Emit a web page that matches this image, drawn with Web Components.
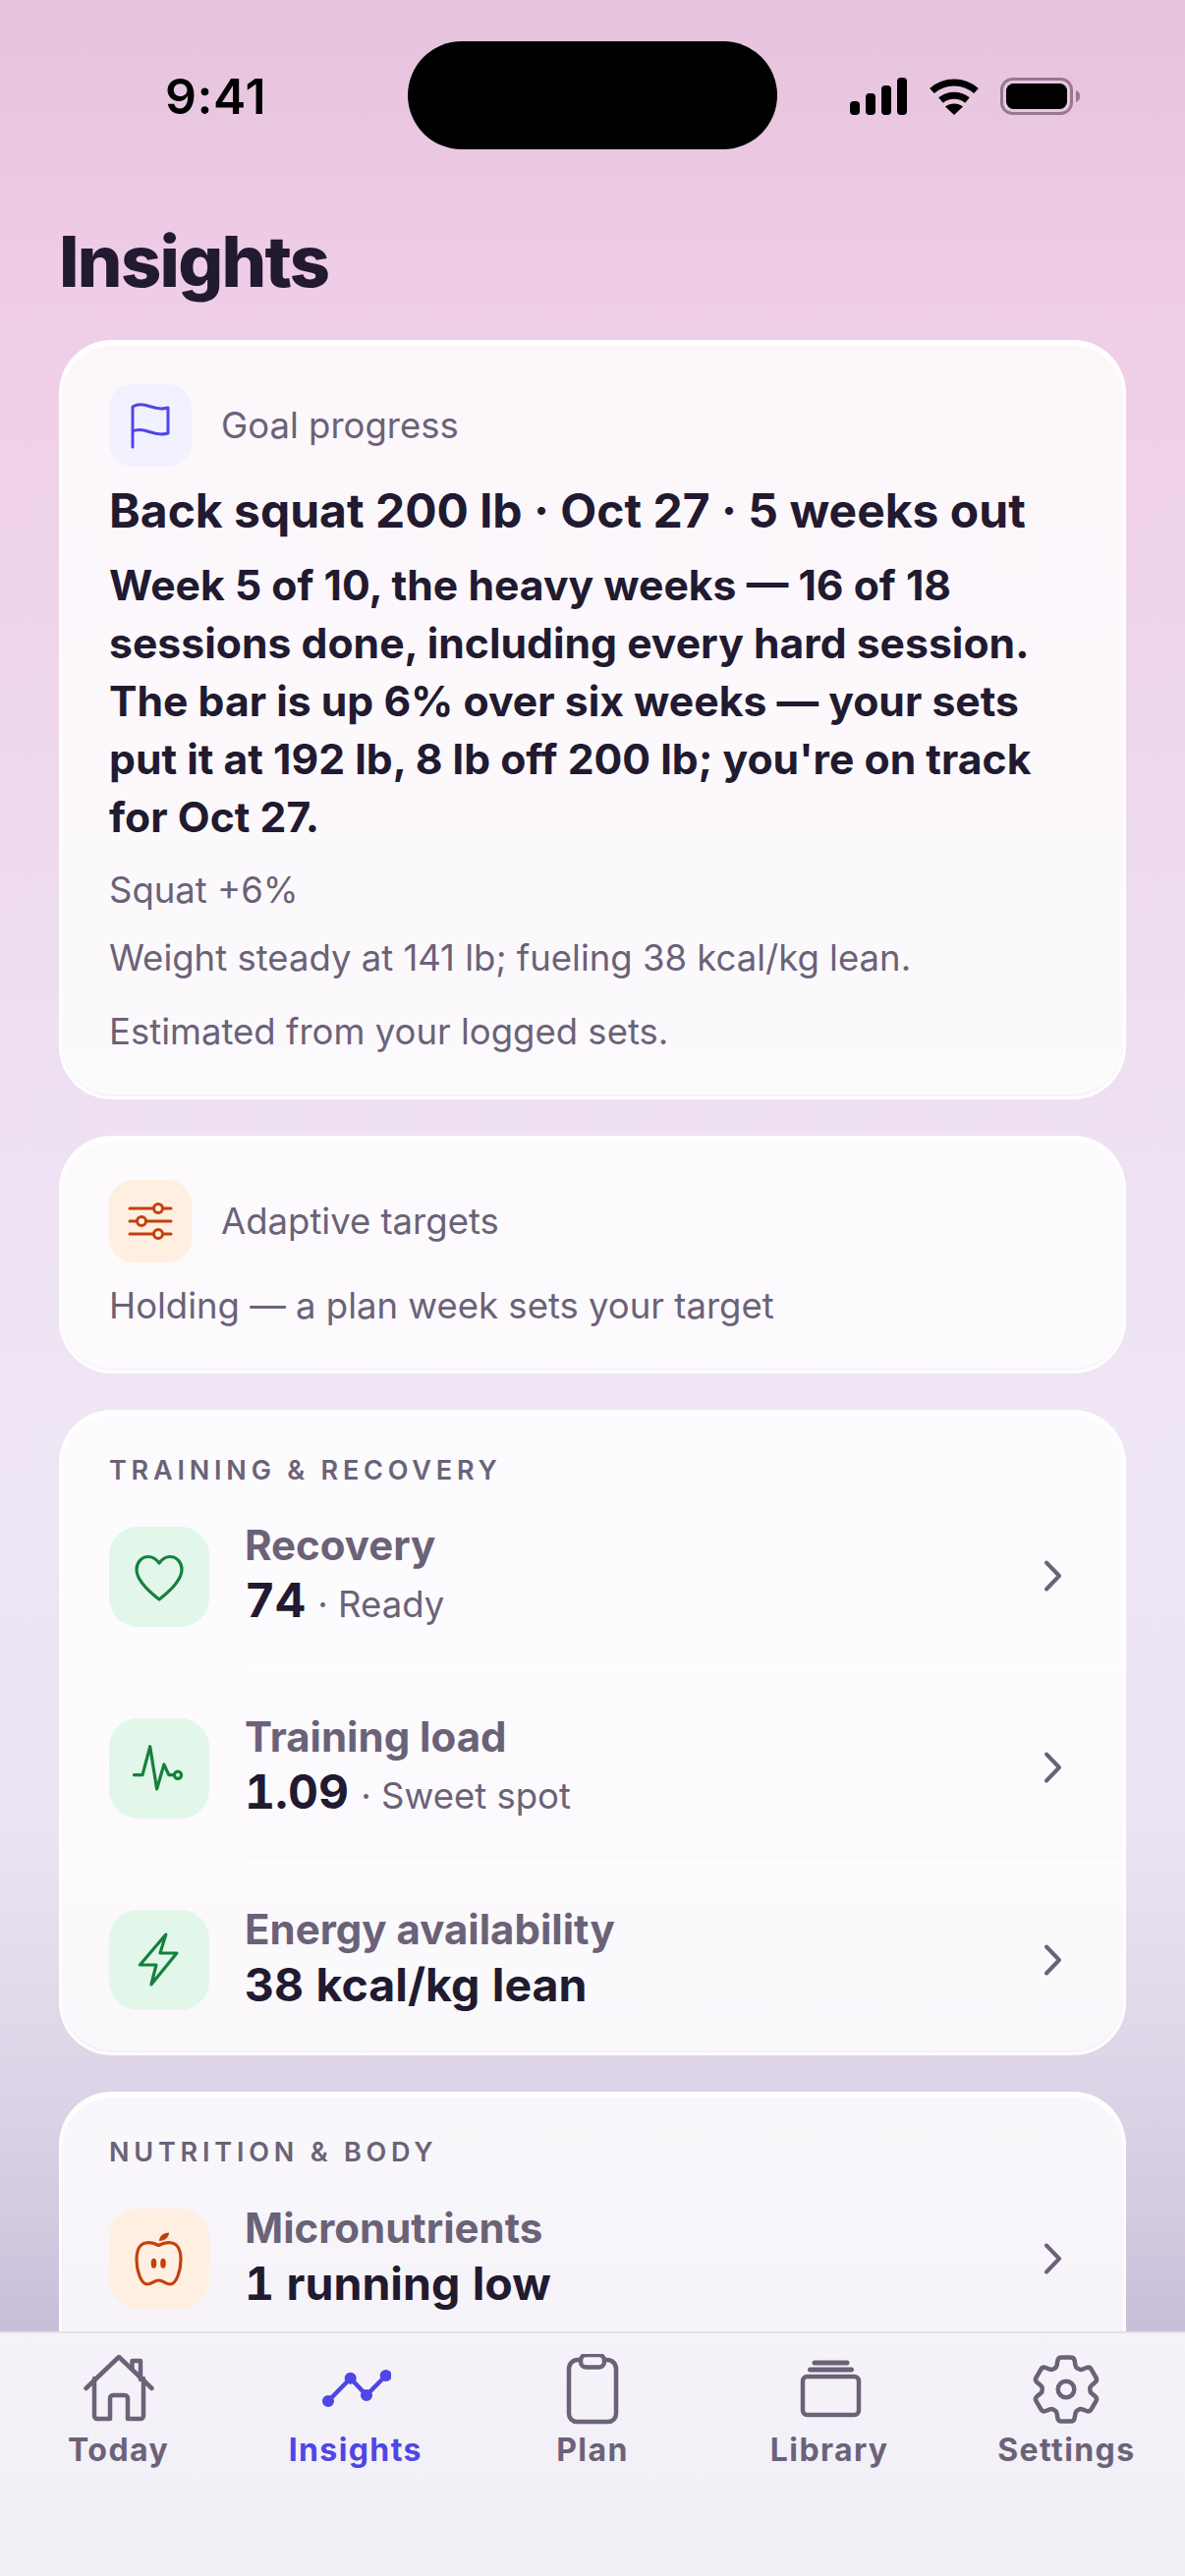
<!DOCTYPE html>
<html lang="en">
<head>
<meta charset="utf-8">
<title>Insights</title>
<style>
  html, body { margin: 0; padding: 0; }
  body { font-family: 'Inter', 'Liberation Sans', sans-serif; color: #211a30; }
</style>
</head>
<body>
<app-screen>
  <status-bar slot="status"></status-bar>
  <h1-title slot="title">Insights</h1-title>

  <glass-card>
    <card-head tone="indigo" icon="flag">Goal progress</card-head>
    <goal-text>
      <span slot="heading">Back squat 200 lb · Oct 27 · 5 weeks out</span>
      <span slot="summary">Week 5 of 10, the heavy weeks — 16 of 18 sessions done, including every hard session. The bar is up 6% over six weeks — your sets put it at 192 lb, 8 lb off 200 lb; you're on track for Oct 27.</span>
      <span slot="delta">Squat +6%</span>
      <span slot="weight">Weight steady at 141 lb; fueling 38 kcal/kg lean.</span>
      <span slot="note">Estimated from your logged sets.</span>
    </goal-text>
  </glass-card>

  <glass-card>
    <card-head tone="orange" icon="sliders">Adaptive targets</card-head>
    <muted-line>Holding — a plan week sets your target</muted-line>
  </glass-card>

  <glass-card flush>
    <section-label>TRAINING &amp; RECOVERY</section-label>
    <metric-row tone="green" icon="heart" name="Recovery" value="74" note="Ready"></metric-row>
    <metric-row tone="green" icon="pulse" name="Training load" value="1.09" note="Sweet spot"></metric-row>
    <metric-row tone="green" icon="bolt" name="Energy availability" value="38 kcal/kg lean"></metric-row>
  </glass-card>

  <!-- runs on under the tab bar, so its bottom corners stay out of view -->
  <glass-card flush clipped>
    <section-label>NUTRITION &amp; BODY</section-label>
    <metric-row tone="orange" icon="apple" name="Micronutrients" value="1 running low"></metric-row>
  </glass-card>

  <tab-bar slot="tabs">
    <tab-item icon="home">Today</tab-item>
    <tab-item icon="chart" active>Insights</tab-item>
    <tab-item icon="clipboard">Plan</tab-item>
    <tab-item icon="stack">Library</tab-item>
    <tab-item icon="gear">Settings</tab-item>
  </tab-bar>
</app-screen>

<script>
  // All glyphs share one table: viewBox plus inner svg markup
  const ICONS = {
    flag: ['0 0 84 84', `<path d="M24 64V23c5-3 10-3 17-.5s12 3.5 19 1.5v26c-7 2-12 1-19-1.500s-12-3-17-.5" fill="none" stroke="currentColor" stroke-width="3" stroke-linecap="round" stroke-linejoin="round"/>`],
    sliders: ['0 0 84 84', `<g fill="none" stroke="currentColor" stroke-width="3" stroke-linecap="round"><path d="M21 29h24M55 29h8M21 42h7M38 42h25M21 55h24M55 55h8"/><circle cx="50" cy="29" r="4.500"/><circle cx="33" cy="42" r="4.500"/><circle cx="50" cy="55" r="4.500"/></g>`],
    heart: ['0 0 102 102', `<path d="M51 37c-3-4-7-6.500-11-6.500-7 0-12 6-12 13 0 11 12 22 23 30.500 11-8.500 23-19.500 23-30.500 0-7-5-13-12-13-4 0-8 2.500-11 6.500Z" fill="none" stroke="currentColor" stroke-width="3.200" stroke-linejoin="round"/>`],
    pulse: ['0 0 102 102', `<g fill="none" stroke="currentColor" stroke-width="3.200" stroke-linecap="round" stroke-linejoin="round"><path d="M25.500 57.700H34l7.700-29 6.900 43.300 7.300-25 4.900 10.700h5.800"/><circle cx="70" cy="57.700" r="3.600"/></g>`],
    bolt: ['0 0 102 102', `<path d="M57.800 25 31.400 56H48l-5.100 20 26-32H52Z" fill="none" stroke="currentColor" stroke-width="3.200" stroke-linecap="round" stroke-linejoin="round"/>`],
    apple: ['0 0 102 102', `<path d="M50.500 37.500C46 35 41 34 37 35c-6 1-9 8-9 17 0 10 4 25 11 25 5 0 7-4 11.500-4s6.500 4 11.500 4c7 0 11-15 11-25 0-9-3-16-9-17-4-1-9 0-13.500 2.500Z" fill="none" stroke="currentColor" stroke-width="3.200" stroke-linejoin="round"/><path d="M51 33c0-5 4-8 10-8.500 0 4.500-4 8.500-10 8.500Z" fill="currentColor"/><ellipse cx="45.500" cy="55.700" rx="2.800" ry="5" fill="currentColor"/><ellipse cx="55" cy="55.700" rx="2.800" ry="5" fill="currentColor"/>`],
    chevron: ['0 0 24 36', `<path d="M5 4.500 18 18 5 31.500" fill="none" stroke="currentColor" stroke-width="4" stroke-linecap="round" stroke-linejoin="round"/>`],
    home: ['0 0 72 72', `<g fill="none" stroke="currentColor" stroke-width="4.500" stroke-linecap="round" stroke-linejoin="round"><path d="M2.500 35 36 3l33.500 32"/><path d="M49.500 15V7h8.500v19"/><path d="M11 25v38a3 3 0 0 0 3 3h13V45a3 3 0 0 1 3-3h12a3 3 0 0 1 3 3v21h13a3 3 0 0 0 3-3V25"/></g>`],
    chart: ['0 0 72 72', `<g fill="none" stroke="currentColor" stroke-width="4.500" stroke-linecap="round" stroke-linejoin="round"><path d="M8 48 30.700 24.700 47 42 66.700 22"/><circle cx="8" cy="48" r="3.800"/><circle cx="30.700" cy="24.700" r="3.800"/><circle cx="47" cy="42" r="3.800"/><circle cx="66.700" cy="22" r="3.800"/></g>`],
    clipboard: ['0 0 72 72', `<g fill="none" stroke="currentColor" stroke-width="4.500" stroke-linecap="round" stroke-linejoin="round"><path d="M24 6h-3a9 9 0 0 0-9 9v46a8 8 0 0 0 8 8h32a8 8 0 0 0 8-8V15a9 9 0 0 0-9-9h-3"/><rect x="24" y="1" width="24" height="12.500" rx="5.500"/></g>`],
    stack: ['0 0 72 72', `<g fill="none" stroke="currentColor" stroke-width="4.500" stroke-linecap="round" stroke-linejoin="round"><rect x="9" y="23" width="57" height="39" rx="4.500"/></g><g fill="none" stroke="currentColor" stroke-width="5" stroke-linecap="round"><path d="M16.500 16H58.500M21 9H54"/></g>`],
    gear: ['2 2 20 20', `<g fill="none" stroke="currentColor" stroke-width="1.250" stroke-linecap="round" stroke-linejoin="round"><path d="M9.594 3.940c.09-.542.56-.94 1.110-.94h2.593c.55 0 1.020.398 1.110.94l.213 1.281c.063.374.313.686.645.870.074.040.147.083.22.127.325.196.72.257 1.075.124l1.217-.456a1.125 1.125 0 0 1 1.370.49l1.296 2.247a1.125 1.125 0 0 1-.26 1.431l-1.003.827c-.293.241-.438.613-.43.992a7.723 7.723 0 0 1 0 .255c-.008.378.137.75.43.991l1.004.827c.424.35.534.955.26 1.430l-1.298 2.247a1.125 1.125 0 0 1-1.369.491l-1.217-.456c-.355-.133-.75-.072-1.076.124a6.470 6.470 0 0 1-.22.128c-.331.183-.581.495-.644.869l-.213 1.281c-.09.543-.56.94-1.110.94h-2.594c-.55 0-1.019-.398-1.110-.94l-.213-1.281c-.062-.374-.312-.686-.644-.87a6.520 6.520 0 0 1-.22-.127c-.325-.196-.72-.257-1.076-.124l-1.217.456a1.125 1.125 0 0 1-1.369-.49l-1.297-2.247a1.125 1.125 0 0 1 .26-1.431l1.004-.827c.292-.24.437-.613.43-.991a6.932 6.932 0 0 1 0-.255c.007-.38-.138-.751-.43-.992l-1.004-.827a1.125 1.125 0 0 1-.26-1.430l1.297-2.247a1.125 1.125 0 0 1 1.370-.491l1.216.456c.356.133.751.072 1.076-.124.072-.044.146-.086.22-.128.332-.183.582-.495.644-.869l.214-1.280Z"/><path d="M14.300 12a2.300 2.300 0 1 1-4.600 0 2.300 2.300 0 0 1 4.600 0Z"/></g>`]
  };

  const svgFor = (name, size) => {
    const [box, inner] = ICONS[name];
    return `<svg xmlns="http://www.w3.org/2000/svg" viewBox="${box}" width="${size}" height="${size}" style="display:block">${inner}</svg>`;
  };

  const TONES = {
    indigo: ['#f2f2fe', '#4f46e5'],
    orange: ['#ffefe0', '#c2410c'],
    green: ['#e3f6ea', '#15803d']
  };

  class BaseElement extends HTMLElement {
    constructor() {
      super();
      this.attachShadow({ mode: 'open' });
    }
    connectedCallback() {
      this.render();
    }
  }

  class AppScreen extends BaseElement {
    render() {
      this.shadowRoot.innerHTML = `
        <style>
          :host {
            display: flex;
            flex-direction: column;
            width: 1206px;
            height: 2622px;
            overflow: hidden;
            background: linear-gradient(180deg,
              #e6c3dc 0, #efcde7 300px, #eed6ec 700px, #eee0f2 1100px,
              #efe6f5 1500px, #ebe4f2 1850px, #ded6e8 2100px, #d4cae1 2250px, #c9bed8 2373px, #c6bad5 2622px);
          }
          .scroll {
            flex: 1;
            min-height: 0;
            overflow: hidden;
            padding: 0 60px;
            display: flex;
            flex-direction: column;
            gap: 37px;
          }
        </style>
        <slot name="status"></slot>
        <slot name="title"></slot>
        <div class="scroll"><slot></slot></div>
        <slot name="tabs"></slot>`;
    }
  }

  class StatusBar extends BaseElement {
    render() {
      this.shadowRoot.innerHTML = `
        <style>
          :host {
            display: flex;
            align-items: flex-start;
            justify-content: space-between;
            position: relative;
            box-sizing: border-box;
            height: 200px;
            padding: 70px 106px 0 168px;
            color: #000;
          }
          .time { font-size: 50px; line-height: 56px; font-weight: 600; letter-spacing: 0.6px; }
          .island {
            position: absolute;
            left: 415px;
            top: 42px;
            width: 376px;
            height: 110px;
            border-radius: 55px;
            background: #000;
          }
          .icons { display: flex; align-items: center; gap: 21.500px; height: 56px; }
          svg { display: block; }
        </style>
        <span class="time">9:41</span>
        <div class="island"></div>
        <div class="icons">
          <svg width="58" height="38" viewBox="0 0 58 38" fill="#000">
            <rect x="0" y="24" width="10" height="14" rx="4"/>
            <rect x="16" y="16" width="10" height="22" rx="4"/>
            <rect x="32" y="8" width="10" height="30" rx="4"/>
            <rect x="48" y="0" width="10" height="38" rx="4"/>
          </svg>
          <svg width="52" height="38" viewBox="0 0 52 38" fill="none" stroke="#000" stroke-width="7">
            <path d="M3.500 13.500C16 2 36 2 48.500 13.500"/>
            <path d="M12.500 23C20 16.500 32 16.500 39.500 23"/>
            <path d="M26 38 17 29.500C22 25.500 30 25.500 35 29.500Z" fill="#000" stroke="none"/>
          </svg>
          <svg width="82" height="38" viewBox="0 0 82 38">
            <rect x="1.500" y="1.500" width="71" height="35" rx="11" fill="none" stroke="#96788f" stroke-width="3"/>
            <rect x="6" y="6" width="62" height="26" rx="7.500" fill="#000"/>
            <path d="M77 13c3 1 4 3 4 6s-1 5-4 6Z" fill="#96788f"/>
          </svg>
        </div>`;
    }
  }

  class H1Title extends BaseElement {
    render() {
      this.shadowRoot.innerHTML = `
        <style>
          :host {
            display: block;
            box-sizing: border-box;
            height: 146px;
            padding: 24px 60px 0;
            font-size: 72px;
            line-height: 84px;
            font-weight: 800;
            letter-spacing: -1.700px;
            color: #211a30;
          }
        </style>
        <slot></slot>`;
    }
  }

  class GlassCard extends BaseElement {
    render() {
      const flush = this.hasAttribute('flush');
      const clipped = this.hasAttribute('clipped');
      this.shadowRoot.innerHTML = `
        <style>
          :host {
            display: block;
            flex: none;
            box-sizing: border-box;
            ${clipped ? 'min-height: 400px;' : ''}
            padding: ${flush ? '49px 0 0 48px' : '42px 48px 40px'};
            border: 3px solid rgba(255, 255, 255, 0.72);
            border-radius: 54px;
            background: rgba(255, 255, 255, 0.82);
            box-shadow: inset 0 3px 0 rgba(255, 255, 255, 0.8), inset 0 -2px 0 rgba(90, 70, 120, 0.035);
          }
        </style>
        <slot></slot>`;
    }
  }

  class IconTile extends BaseElement {
    render() {
      const size = Number(this.getAttribute('size') || 84);
      const [bg, fg] = TONES[this.getAttribute('tone') || 'indigo'];
      this.shadowRoot.innerHTML = `
        <style>
          :host {
            display: block;
            flex: none;
            width: ${size}px;
            height: ${size}px;
            border-radius: ${size * 0.29}px;
            background: ${bg};
            color: ${fg};
          }
        </style>
        ${svgFor(this.getAttribute('icon'), size)}`;
    }
  }

  class CardHead extends BaseElement {
    render() {
      this.shadowRoot.innerHTML = `
        <style>
          :host {
            display: flex;
            align-items: center;
            gap: 30px;
            font-size: 36.500px;
            line-height: 52px;
            color: #6b6278;
          }
        </style>
        <icon-tile tone="${this.getAttribute('tone')}" icon="${this.getAttribute('icon')}"></icon-tile>
        <span><slot></slot></span>`;
    }
  }

  class GoalText extends BaseElement {
    render() {
      this.shadowRoot.innerHTML = `
        <style>
          :host { display: block; }
          .heading { margin-top: 16px; font-size: 48px; line-height: 58px; font-weight: 700; color: #211a30; }
          .summary { margin-top: 17px; font-size: 42.700px; line-height: 59px; font-weight: 700; color: #211a30; }
          .muted { font-size: 36.500px; line-height: 52px; color: #6b6278; }
          .delta { margin-top: 19px; }
          .weight { margin-top: 17px; }
          .note { margin-top: 23px; }
        </style>
        <div class="heading"><slot name="heading"></slot></div>
        <div class="summary"><slot name="summary"></slot></div>
        <div class="muted delta"><slot name="delta"></slot></div>
        <div class="muted weight"><slot name="weight"></slot></div>
        <div class="muted note"><slot name="note"></slot></div>`;
    }
  }

  class MutedLine extends BaseElement {
    render() {
      this.shadowRoot.innerHTML = `
        <style>
          :host { display: block; margin-top: 18px; font-size: 36.500px; line-height: 52px; color: #6b6278; }
        </style>
        <slot></slot>`;
    }
  }

  class SectionLabel extends BaseElement {
    render() {
      this.shadowRoot.innerHTML = `
        <style>
          :host {
            display: block;
            font-size: 27px;
            line-height: 20px;
            font-weight: 600;
            letter-spacing: 4.800px;
            color: #6b6278;
          }
        </style>
        <slot></slot>`;
    }
  }

  class MetricRow extends BaseElement {
    render() {
      const value = this.getAttribute('value');
      const note = this.getAttribute('note');
      this.shadowRoot.innerHTML = `
        <style>
          :host {
            display: flex;
            align-items: center;
            box-sizing: border-box;
            height: 195px;
            padding-right: 53px;
          }
          :host(:last-child) { margin-bottom: -3px; }
          :host(:not(:last-child)) .body { border-bottom: 2px solid rgba(255, 255, 255, 0.7); }
          .body {
            flex: 1;
            align-self: stretch;
            display: flex;
            align-items: center;
            margin-left: 36px;
            margin-right: -53px;
            padding-right: 53px;
          }
          .text { flex: 1; min-width: 0; }
          .name { font-size: 42px; line-height: 54px; font-weight: 700; color: #6b6278; }
          .line { font-size: 36.500px; line-height: 58px; color: #6b6278; white-space: nowrap; }
          .value { font-size: ${note ? 48 : 46.5}px; font-weight: 700; color: #211a30; margin-right: 2px; font-variant-numeric: tabular-nums; }
          .chev { color: #6b6278; }
        </style>
        <icon-tile size="102" tone="${this.getAttribute('tone')}" icon="${this.getAttribute('icon')}"></icon-tile>
        <div class="body">
          <div class="text">
            <div class="name">${this.getAttribute('name')}</div>
            <div class="line"><span class="value">${value}</span>${note ? ` · ${note}` : ''}</div>
          </div>
          <div class="chev">${svgFor('chevron', 36)}</div>
        </div>`;
    }
  }

  class TabBar extends BaseElement {
    render() {
      this.shadowRoot.innerHTML = `
        <style>
          :host {
            display: grid;
            grid-template-columns: repeat(5, 1fr);
            align-content: start;
            box-sizing: border-box;
            flex: none;
            height: 249px;
            padding-top: 21px;
            border-top: 2px solid #e3dfe9;
            background: linear-gradient(180deg, #f5f3f9, #f1eff6);
          }
        </style>
        <slot></slot>`;
    }
  }

  class TabItem extends BaseElement {
    render() {
      const active = this.hasAttribute('active');
      this.shadowRoot.innerHTML = `
        <style>
          :host {
            display: flex;
            flex-direction: column;
            align-items: center;
            gap: 6px;
            font-size: 32px;
            line-height: 40px;
            font-weight: 700;
            letter-spacing: 1.400px;
            color: ${active ? '#4f46e5' : '#6b6278'};
          }
        </style>
        ${svgFor(this.getAttribute('icon'), 72)}
        <span><slot></slot></span>`;
    }
  }

  customElements.define('app-screen', AppScreen);
  customElements.define('status-bar', StatusBar);
  customElements.define('h1-title', H1Title);
  customElements.define('glass-card', GlassCard);
  customElements.define('icon-tile', IconTile);
  customElements.define('card-head', CardHead);
  customElements.define('goal-text', GoalText);
  customElements.define('muted-line', MutedLine);
  customElements.define('section-label', SectionLabel);
  customElements.define('metric-row', MetricRow);
  customElements.define('tab-bar', TabBar);
  customElements.define('tab-item', TabItem);
</script>
</body>
</html>
